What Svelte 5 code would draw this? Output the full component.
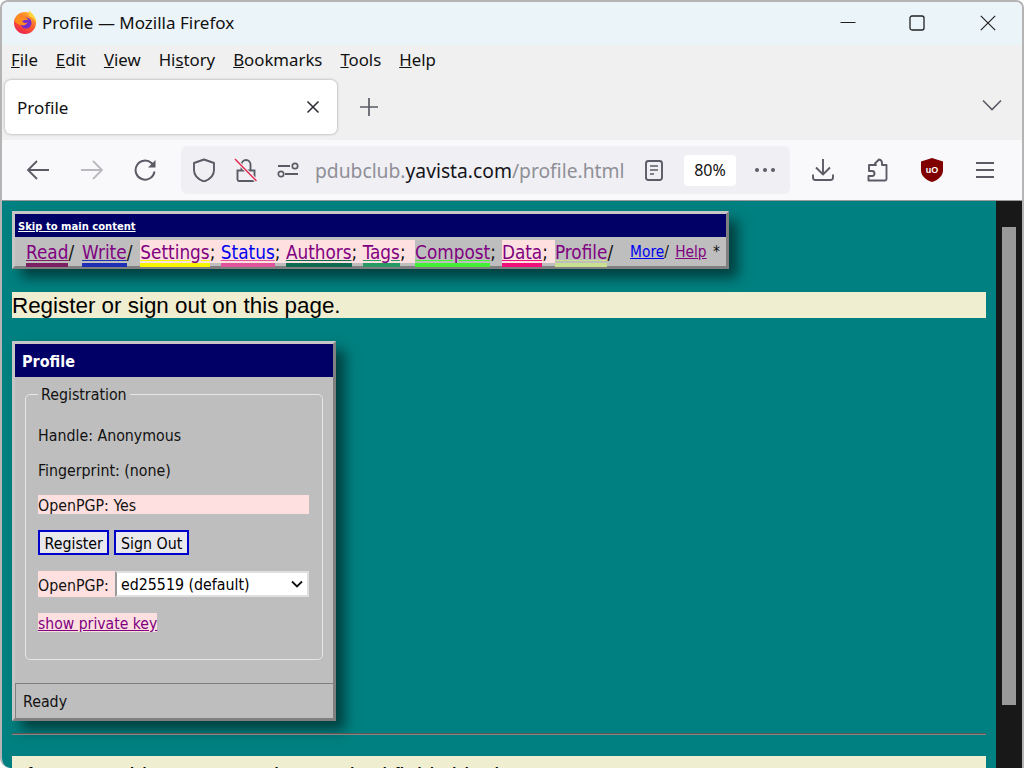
<script>
  const menus = [
    { key: 'F', rest: 'ile' },
    { key: 'E', rest: 'dit' },
    { key: 'V', rest: 'iew' },
    { pre: 'Hi', key: 's', rest: 'tory' },
    { key: 'B', rest: 'ookmarks' },
    { key: 'T', rest: 'ools' },
    { key: 'H', rest: 'elp' }
  ];

  const navLinks = [
    { label: 'Read', sep: '/', color: '#7b1f63', pink: false },
    { label: 'Write', sep: '/', color: '#1c2fb5', pink: false },
    { label: 'Settings', sep: ';', color: '#f5f500', pink: true },
    { label: 'Status', sep: ';', color: '#e0559a', pink: true, fresh: true },
    { label: 'Authors', sep: ';', color: '#0e6b50', pink: true },
    { label: 'Tags', sep: ';', color: '#2a9a65', pink: true },
    { label: 'Compost', sep: ';', color: '#44f033', pink: false },
    { label: 'Data', sep: ';', color: '#f0107a', pink: true },
    { label: 'Profile', sep: '/', color: '#c8e090', pink: false }
  ];
</script>

<div class="window">
  <header class="titlebar">
    <svg class="fx" viewBox="0 0 24 24" width="24" height="24" aria-hidden="true">
      <defs>
        <linearGradient id="fxg" x1="0.8" y1="0.1" x2="0.3" y2="1">
          <stop offset="0" stop-color="#ffb02e" />
          <stop offset="0.5" stop-color="#ff5a2c" />
          <stop offset="1" stop-color="#e8224f" />
        </linearGradient>
      </defs>
      <circle cx="12" cy="13" r="11" fill="url(#fxg)" />
      <path d="M15.500 0c3.500 3 7.500 7 8 13-2-4-5-6.500-8-7 1-2 1-4 0-6z" fill="#ffd43a" />
      <circle cx="13" cy="13" r="5.500" fill="#6f2bd0" />
      <path d="M1.200 10c1.500-3.500 3.500-5.500 7-6-1 1-1.500 2-1.500 3 3-.8 8 .5 9 3.500-2-.8-5-.6-6.500 1 1 1.600 3.500 1.800 5.500.8-1 2.500-3.500 3.500-5.500 3C5.500 14.800 2 13 1.200 10z" fill="#ff8a1f" />
    </svg>
    <span class="title">Profile — Mozilla Firefox</span>
    <div class="caption">
      <svg viewBox="0 0 16 16" width="16" height="16" aria-hidden="true"><path d="M0.500 7.500h15" stroke="#222" fill="none" /></svg>
      <svg viewBox="0 0 16 16" width="16" height="16" aria-hidden="true"><rect x="1" y="1" width="14" height="14" rx="2" stroke="#222" stroke-width="1.300" fill="none" /></svg>
      <svg viewBox="0 0 16 16" width="16" height="16" aria-hidden="true"><path d="M.8.800l14.400 14.400M15.200.800L.8 15.200" stroke="#222" stroke-width="1.200" fill="none" /></svg>
    </div>
  </header>

  <nav class="menubar">
    {#each menus as m}
      <span class="menu">{m.pre ?? ''}<u>{m.key}</u>{m.rest}</span>
    {/each}
  </nav>

  <div class="tabbar">
    <div class="tab">
      <span>Profile</span>
      <svg viewBox="0 0 14 14" width="14" height="14" aria-hidden="true"><path d="M1.500 1.500l11 11M12.500 1.500l-11 11" stroke="#2b2a33" stroke-width="1.500" fill="none" /></svg>
    </div>
    <svg class="plus" viewBox="0 0 18 18" width="18" height="18" aria-hidden="true"><path d="M9 0v18M0 9h18" stroke="#5b5b66" stroke-width="1.700" fill="none" /></svg>
    <svg class="chev" viewBox="0 0 20 12" width="20" height="12" aria-hidden="true"><path d="M1 1.500l9 9 9-9" stroke="#5b5b66" stroke-width="1.600" fill="none" /></svg>
  </div>

  <div class="toolbar">
    <button class="tool" aria-label="Back">
      <svg viewBox="0 0 24 24" width="24" height="24"><path d="M23 12H2M11 3l-9 9 9 9" stroke="#5b5b66" stroke-width="1.800" fill="none" /></svg>
    </button>
    <button class="tool faded" aria-label="Forward">
      <svg viewBox="0 0 24 24" width="24" height="24"><path d="M1 12h21M13 3l9 9-9 9" stroke="#b9b9bf" stroke-width="1.800" fill="none" /></svg>
    </button>
    <button class="tool" aria-label="Reload">
      <svg viewBox="0 0 24 24" width="24" height="24"><path d="M20.500 13.500a9.500 9.500 0 1 1-3-8.400L20.500 8" stroke="#5b5b66" stroke-width="2" fill="none" /><path d="M21.500 2v7.500H14z" fill="#5b5b66" /></svg>
    </button>

    <div class="urlbar">
      <svg class="u-shield" viewBox="0 0 24 24" width="24" height="24" aria-hidden="true"><path d="M12 1.500l10 3.500v7c0 6-4.500 9.500-10 11.500C6.500 21.500 2 18 2 12V5z" stroke="#5b5b66" stroke-width="1.900" fill="none" stroke-linejoin="round" /></svg>
      <svg class="u-lock" viewBox="0 0 24 24" width="24" height="24" aria-hidden="true">
        <path d="M3.500 12.500h17v9a1.500 1.500 0 0 1-1.500 1.500H5a1.500 1.500 0 0 1-1.500-1.500zM7.500 12.500V6.500a4.500 4.500 0 0 1 9 0v6" stroke="#5b5b66" stroke-width="1.900" fill="none" />
        <path d="M1 1l21.500 22" stroke="#f0f0f4" stroke-width="3.500" fill="none" />
        <path d="M1 1l21.500 22" stroke="#e22850" stroke-width="1.500" fill="none" />
      </svg>
      <svg class="u-perm" viewBox="0 0 24 24" width="24" height="24" aria-hidden="true">
        <path d="M2 8h12M9 16h13" stroke="#5b5b66" stroke-width="1.900" fill="none" />
        <circle cx="19" cy="8" r="2.700" stroke="#5b5b66" stroke-width="1.700" fill="none" />
        <circle cx="5" cy="16" r="2.700" stroke="#5b5b66" stroke-width="1.700" fill="none" />
      </svg>
      <span class="url"><span class="dim">pdubclub.</span>yavista.com<span class="dim">/profile.html</span></span>
      <svg class="u-reader" viewBox="0 0 20 24" width="20" height="24" aria-hidden="true">
        <rect x="2" y="3" width="16" height="19" rx="2.500" stroke="#5b5b66" stroke-width="1.900" fill="none" />
        <path d="M6 8h8M6 12h8M6 16h4" stroke="#5b5b66" stroke-width="1.700" fill="none" />
      </svg>
      <span class="zoom">80%</span>
      <svg class="u-dots" viewBox="0 0 22 6" width="22" height="6" aria-hidden="true">
        <circle cx="3" cy="3" r="2" fill="#5b5b66" /><circle cx="11" cy="3" r="2" fill="#5b5b66" /><circle cx="19" cy="3" r="2" fill="#5b5b66" />
      </svg>
    </div>

    <button class="tool end" aria-label="Downloads">
      <svg viewBox="0 0 24 24" width="24" height="24"><path d="M12 1v15M5 9.500l7 7 7-7" stroke="#5b5b66" stroke-width="1.900" fill="none" /><path d="M2 16.500v3a2.500 2.500 0 0 0 2.500 2.500h15a2.500 2.500 0 0 0 2.500-2.500v-3" stroke="#5b5b66" stroke-width="1.900" fill="none" /></svg>
    </button>
    <button class="tool" aria-label="Extensions">
      <svg viewBox="0 0 24 24" width="24" height="24"><path d="M11 7h-7v6h3a2.500 2.500 0 0 1 0 5H3.500v4.500H20a1.500 1.500 0 0 0 1.500-1.500V7H17V5a3.500 3.500 0 0 0-3-3.500L10 5.500z" stroke="#5b5b66" stroke-width="1.900" fill="none" stroke-linejoin="round" /></svg>
    </button>
    <button class="tool" aria-label="uBlock Origin">
      <span class="ublock">
        <svg viewBox="0 0 24 24" width="24" height="24"><path d="M12 0l11 3.500v9C23 18 18 22 12 24 6 22 1 18 1 12.500v-9z" fill="#800000" /></svg>
        <span class="uo">uO</span>
      </span>
    </button>
    <button class="tool" aria-label="Menu">
      <svg viewBox="0 0 24 24" width="24" height="24"><path d="M3 5h18M3 12h18M3 19h18" stroke="#5b5b66" stroke-width="1.900" fill="none" /></svg>
    </button>
  </div>

  <div class="viewport">
    <main class="page">
      <div class="navpanel">
        <div class="skipbar"><a href="#main">Skip to main content</a></div>
        <div class="navline">
          {#each navLinks as l}
            <span class="item" class:pink={l.pink}>
              <a href="#main" class:fresh={l.fresh} style="--c:{l.color}">{l.label}</a><span class="sep">{l.sep}</span>
            </span>
          {/each}
          <span class="small">
            <a href="#main" class="fresh">More</a>/ <a class="help" href="#main">Help</a>
            <span class="star">*</span>
          </span>
        </div>
      </div>

      <p class="strip">Register or sign out on this page.</p>

      <section class="card">
        <h2>Profile</h2>
        <div class="cardbody">
          <fieldset>
            <legend>Registration</legend>
            <p>Handle: Anonymous</p>
            <p>Fingerprint: (none)</p>
            <p class="pinkrow">OpenPGP: Yes</p>
            <div class="buttons">
              <button class="btn">Register</button>
              <button class="btn">Sign Out</button>
            </div>
            <div class="selectrow">
              <label for="algo">OpenPGP:</label>
              <span class="selectwrap">
                <select id="algo"><option>ed25519 (default)</option></select>
                <svg viewBox="0 0 12 8" width="12" height="8" aria-hidden="true"><path d="M1 1.500l5 5 5-5" stroke="#111" stroke-width="1.800" fill="none" /></svg>
              </span>
            </div>
            <a class="keylink" href="#main">show private key</a>
          </fieldset>
        </div>
        <div class="status">Ready</div>
      </section>

      <hr />

      <p class="strip lower">If you see this message, the required fields blank.</p>
    </main>
    <div class="scrollbar"><div class="thumb"></div></div>
  </div>
</div>

<style>
  :global(body) { margin: 0; background: #fff; overflow: hidden; }
  .window {
    width: 1024px; height: 768px; box-sizing: border-box;
    border: 2px solid #b4b4b4; border-bottom: 0; border-radius: 8px 8px 0 10px;
    display: flex; flex-direction: column; overflow: hidden;
    font-family: "Noto Sans", "Open Sans", sans-serif; color: #111;
  }
  .titlebar {
    height: 43px; flex: none; background: #ebf4f8;
    display: flex; align-items: center; padding: 0 0 2px 11px; box-sizing: border-box;
  }
  .fx { margin: -2px 5px 0 0; }
  .title { font-size: 17px; }
  .caption { margin-left: auto; display: flex; gap: 55px; padding-right: 26px; align-items: center; }
  .caption svg:first-child { margin-right: -2px; margin-left: 2px; }

  .menubar {
    height: 32px; flex: none; background: #f0f0f0; box-sizing: border-box; padding: 0 0 4px 9px;
    display: flex; align-items: center; gap: 18px; font-size: 16.800px;
  }
  .tabbar {
    height: 63px; flex: none; background: #f0f0f0; position: relative;
    display: flex; align-items: flex-start; padding: 3px 0 0 3px; box-sizing: border-box;
  }
  .tab {
    width: 332px; height: 54px; background: #fff; border-radius: 6px; box-sizing: border-box;
    box-shadow: 0 0 3px rgba(0, 0, 0, 0.35); font-size: 17px;
    display: flex; align-items: center; justify-content: space-between; padding: 0 17px 0 12px;
  }
  .plus { margin: 18px 0 0 23px; }
  .chev { margin: 19px 20px 0 auto; }

  .toolbar {
    height: 60px; flex: none; background: #f9f9fb; border-bottom: 1px solid #9a9a9a;
    box-sizing: content-box; display: flex; align-items: center; padding-left: 9px;
  }
  .tool {
    width: 54px; height: 40px; flex: none; padding: 0; border: 0; background: none;
    display: flex; align-items: center; justify-content: center;
  }
  .urlbar {
    width: 609px; height: 48px; margin-left: 8px; background: #f0f0f4; border-radius: 6px;
    display: flex; align-items: center; padding-left: 11px; box-sizing: border-box; flex: none;
  }
  .u-lock { margin-left: 18px; }
  .u-perm { margin-left: 18px; }
  .url { margin-left: 15px; font-size: 19.250px; color: #15141a; white-space: nowrap; width: 319px; }
  .dim { color: #8f8f97; }
  .u-reader { margin-left: 10px; }
  .zoom {
    margin-left: 20px; width: 52px; height: 31px; background: #fff; border-radius: 4px;
    font-size: 16px; display: flex; align-items: center; justify-content: center;
  }
  .u-dots { margin-left: 18px; }
  .tool.end { margin-left: 6px; }
  .ublock { position: relative; display: block; width: 24px; height: 24px; margin-left: 2px; }
  .uo {
    position: absolute; inset: 0; color: #fff; font-size: 9px; font-weight: 700;
    display: flex; align-items: center; justify-content: center;
    font-family: "Liberation Sans", sans-serif;
  }

  .viewport { flex: 1; min-height: 0; display: flex; overflow: hidden; }
  .page {
    flex: 1; min-width: 0; background: #008080; padding: 10px; box-sizing: border-box;
    font-family: "DejaVu Sans Condensed", "DejaVu Sans", Tahoma, sans-serif; font-stretch: condensed; font-size: 16px;
  }
  .scrollbar {
    width: 26px; flex: none; background: #181818; padding: 26px 6px 0 6px; box-sizing: border-box;
  }
  .thumb { height: 478px; background: #999; }

  .navpanel {
    width: 717px; height: 58px; box-sizing: border-box; background: #bebebe;
    border: 3px solid; border-color: #c6c6c6 #808080 #808080 #c6c6c6;
    box-shadow: 9px 9px 12px rgba(0, 0, 0, 0.5);
  }
  .skipbar { height: 23px; background: #000066; display: flex; align-items: center; padding: 2px 0 0 3px; box-sizing: border-box; }
  .skipbar a { color: #fff; font: 700 10px "DejaVu Sans", sans-serif; font-stretch: normal; }
  .navline {
    display: flex; align-items: flex-start; height: 30px; padding: 3px 0 0 11px; box-sizing: border-box;
    font-size: 18.800px; line-height: 25px;
  }
  .item { display: flex; align-items: flex-start; margin-right: 8px; }
  .item.pink { margin-right: 0; }
  .item a {
    display: block; height: 23px; color: #800080; border-bottom: 4px solid var(--c); background-clip: padding-box;
    text-decoration-color: var(--c);
  }
  .item a.fresh { color: #0000ee; }
  .item.pink a, .item.pink .sep { background-color: #ffe0e0; }
  .item .sep { height: 23px; }
  .item.pink .sep { padding-right: 5.500px; }
  .item:nth-child(6) .sep { padding-right: 9.500px; }
  .item:nth-child(7) { margin-right: 6px; }
  .item:nth-child(8) .sep { padding-right: 7px; }
  .small { font-size: 15.300px; margin-left: 9px; white-space: nowrap; }
  .small a { color: #800080; }
  .small a.fresh { color: #0000ee; }
  .small a.help { margin-left: 2px; }
  .star { margin-left: 2px; }

  .strip {
    margin: 23px 0 0; height: 26px; background: #f0eed0;
    font: 22.400px/27px "Liberation Sans", Arial, sans-serif; font-stretch: normal; color: #000; overflow: hidden;
  }
  .card {
    width: 324px; height: 380px; margin-top: 23px; box-sizing: border-box; background: #bebebe;
    border: 3px solid; border-color: #c6c6c6 #808080 #808080 #c6c6c6;
    box-shadow: 9px 9px 12px rgba(0, 0, 0, 0.5);
    display: flex; flex-direction: column;
  }
  .card h2 {
    margin: 0; height: 33px; line-height: 35px; padding-left: 7px; background: #000066; color: #fff;
    font-size: 16px; font-weight: 700;
  }
  .cardbody { flex: 1; padding: 8px 10px 0; }
  fieldset {
    margin: 0; height: 275px; box-sizing: border-box; padding: 21px 12px 0; min-width: 0;
    border: 1px solid #e6e6e6; border-radius: 5px; font-size: 15.800px;
  }
  legend { padding: 0 3px; margin-left: 0; line-height: 19px; }
  fieldset p { margin: 0 0 14px; height: 21px; line-height: 21px; }
  .pinkrow { background: #ffe0e0; width: 271px; height: 19px !important; line-height: 21px !important; margin-bottom: 16px !important; }
  .buttons { display: flex; gap: 5px; }
  .btn {
    height: 25px; padding: 1px 4.500px 0; border: 2px solid #0000cc; background: #e9e9ed; color: #000;
    font: 15.800px "DejaVu Sans Condensed", "DejaVu Sans", sans-serif; font-stretch: condensed; border-radius: 0;
  }
  .selectrow { display: flex; margin-top: 16px; height: 26px; }
  .selectrow label { background: #ffe0e0; width: 77px; flex: none; line-height: 29px; }
  .selectwrap { position: relative; display: block; flex: none; width: 194px; }
  select {
    appearance: none; width: 100%; height: 26px; box-sizing: border-box; border: 2px solid #e0e0e0;
    border-left-color: #999; background: #fff; font: 15.800px "DejaVu Sans Condensed", "DejaVu Sans", sans-serif; font-stretch: condensed; color: #000; padding: 1px 4px 0;
    border-radius: 0;
  }
  .selectwrap svg { position: absolute; right: 6px; top: 9px; }
  .keylink {
    display: inline-block; height: 19px; margin-top: 16px; background: #ffe0e0; color: #800080;
    font-size: 15.600px; line-height: 22px;
  }
  .status {
    height: 35px; flex: none; box-sizing: border-box; line-height: 36px; padding-left: 7px;
    border-top: 1px solid #808080; border-left: 1px solid #808080; font-size: 15.800px;
  }
  hr { margin: 12px 0 0; border: 0; border-top: 1px solid #5c5555; border-bottom: 1px solid #858585; }
  .lower { margin-top: 21px; padding: 6px 0 0 8px; height: 20px; box-sizing: content-box; }
</style>
